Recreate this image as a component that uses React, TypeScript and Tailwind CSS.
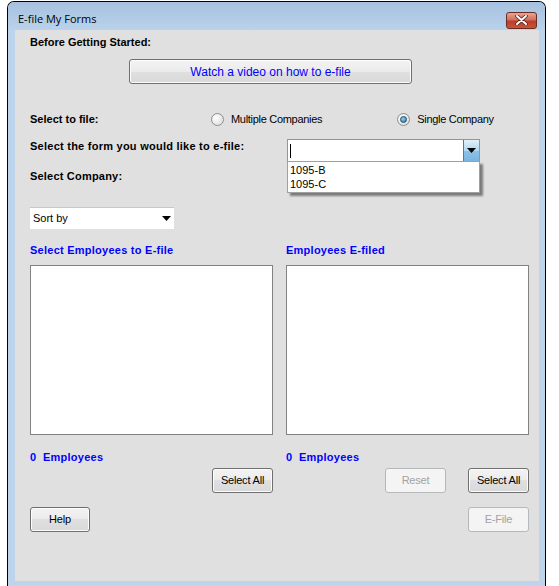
import React from "react";

const label = "font-['Liberation_Sans',Arial,sans-serif]";

function WinButton({
  children,
  disabled,
  className = "",
  textClass = "",
}: {
  children: React.ReactNode;
  disabled?: boolean;
  className?: string;
  textClass?: string;
}) {
  return (
    <div
      className={
        "flex items-center justify-center rounded-[3px] border " +
        (disabled
          ? "border-[#b5b9bc] bg-[#f4f4f4] text-[#a3a3a3] "
          : "border-[#6f6f6f] bg-[linear-gradient(#f3f3f3,#ebebeb_50%,#e0e0e0_50%,#d9d9d9)] text-black shadow-[inset_0_0_0_1px_#fcfcfc] ") +
        className
      }
    >
      <span className={"text-[11px] leading-none tracking-[-0.2px] " + label + " " + textClass}>{children}</span>
    </div>
  );
}

function Radio({ checked, text }: { checked?: boolean; text: string }) {
  return (
    <div className="flex items-center gap-[7px]">
      <div className="flex h-[13px] w-[13px] items-center justify-center rounded-full border border-[#8e8f8f] bg-[radial-gradient(circle_at_35%_35%,#ffffff,#d6d6d6)]">
        {checked && (
          <div className="h-[7px] w-[7px] rounded-full border border-[#1d4e70] bg-[radial-gradient(circle_at_40%_35%,#9bd2f4,#1f6ea6)]" />
        )}
      </div>
      <span className={"text-[11px] tracking-[-0.3px] text-black " + label}>{text}</span>
    </div>
  );
}

function SmallArrow() {
  return (
    <svg width="9" height="5" viewBox="0 0 9 5">
      <path d="M0 0h9L4.5 5z" fill="#000" />
    </svg>
  );
}

export default function App() {
  return (
    <div className="h-[586px] w-[559px] overflow-hidden bg-white">
      <div className="ml-[7px] mt-[1px] h-[600px] w-[539px] rounded-t-[7px] border border-b-0 border-black bg-[#bdd4ec]">
        {/* title bar */}
        <div className="flex h-[28px] items-center justify-between rounded-t-[6px] bg-[linear-gradient(#a6c1df,#bad2eb)] pl-[10px] pr-[8px]">
          <span className="mt-[6px] font-['Open_Sans',sans-serif] text-[11px] text-black">E-file My Forms</span>
          <div className="mt-[8px] flex h-[17px] w-[31px] items-center justify-center rounded-[3px] border border-[#6b2a22] bg-[linear-gradient(#e6a698,#d0705d_45%,#bf3d27_55%,#c8533c)]">
            <svg width="13" height="10" viewBox="0 0 13 10">
              <path d="M2 1l9 8M11 1l-9 8" stroke="#5a2018" strokeWidth="3.6" strokeLinecap="round" />
              <path d="M2 1l9 8M11 1l-9 8" stroke="#ffffff" strokeWidth="2" strokeLinecap="round" />
            </svg>
          </div>
        </div>

        {/* client area */}
        <div className="ml-[7px] h-[551px] w-[524px] bg-[#e0e0e0] pl-[15px] pr-[10px]">
          <div className={"pt-[6px] text-[11px] font-bold leading-[13px] text-black " + label}>
            Before Getting Started:
          </div>

          <WinButton className="ml-[99px] mt-[10px] h-[25px] w-[283px]" textClass="text-[#0000ff] text-[12px] tracking-[0px]">
            Watch a video on how to e-file
          </WinButton>

          <div className="mt-[28px] flex h-[14px] items-center">
            <span className={"w-[181px] text-[11px] font-bold text-black " + label}>Select to file:</span>
            <Radio text="Multiple Companies" />
            <div className="ml-[75px]">
              <Radio checked text="Single Company" />
            </div>
          </div>

          <div className="relative mt-[13px] flex h-[23px] items-start">
            <span className={"w-[257px] pt-[0px] text-[11px] font-bold leading-[14px] tracking-[0.25px] text-black " + label}>
              Select the form you would like to e-file:
            </span>
            <div className="flex h-[23px] w-[193px] border border-[#7a9cbc] bg-white">
              <div className="flex flex-1 items-center pl-[2px]">
                <div className="h-[14px] w-[1px] bg-black" />
              </div>
              <div className="flex w-[16px] items-center justify-center border-l border-[#3c7fb1] bg-[linear-gradient(#e3f1fb,#b1d7f1_50%,#8cc2e8_50%,#7ab5df)]">
                <SmallArrow />
              </div>
            </div>
            <div className="absolute left-[257px] top-[22px] w-[193px] border border-[#a0a0a0] bg-white py-[1px] shadow-[3px_3px_2px_rgba(0,0,0,0.45)]">
              <div className={"h-[14px] pl-[2px] text-[11px] leading-[14px] text-black " + label}>1095-B</div>
              <div className={"h-[14px] pl-[2px] text-[11px] leading-[14px] text-black " + label}>1095-C</div>
            </div>
          </div>

          <div className={"mt-[7px] text-[11px] font-bold leading-[14px] tracking-[0.2px] text-black " + label}>
            Select Company:
          </div>

          <div className="mt-[24px] flex h-[22px] w-[144px] items-center justify-between border-t border-[#c8c8c8] bg-white pl-[3px] pr-[3px]">
            <span className={"text-[11px] text-black " + label}>Sort by</span>
            <SmallArrow />
          </div>

          <div className="mt-[14px] grid grid-cols-[243px_243px] gap-x-[13px]">
            <div className={"text-[11px] font-bold leading-[14px] tracking-[0.25px] text-[#0000ff] " + label}>
              Select Employees to E-file
            </div>
            <div className={"text-[11px] font-bold leading-[14px] tracking-[0.25px] text-[#0000ff] " + label}>
              Employees E-filed
            </div>

            <div className="mt-[8px] h-[170px] border border-[#828282] bg-white" />
            <div className="mt-[8px] h-[170px] border border-[#828282] bg-white" />

            <div className={"mt-[15px] text-[11px] font-bold leading-[14px] tracking-[0.25px] text-[#0000ff] " + label}>
              0&nbsp;&nbsp;Employees
            </div>
            <div className={"mt-[15px] text-[11px] font-bold leading-[14px] tracking-[0.25px] text-[#0000ff] " + label}>
              0&nbsp;&nbsp;Employees
            </div>

            <div className="mt-[4px] flex justify-end">
              <WinButton className="h-[25px] w-[61px]">Select All</WinButton>
            </div>
            <div className="mt-[4px] flex justify-between pl-[99px]">
              <WinButton disabled className="h-[25px] w-[61px]">Reset</WinButton>
              <WinButton className="h-[25px] w-[61px]">Select All</WinButton>
            </div>

            <div className="mt-[14px] flex">
              <WinButton className="h-[25px] w-[60px]">Help</WinButton>
            </div>
            <div className="mt-[14px] flex justify-end">
              <WinButton disabled className="h-[25px] w-[61px]">E-File</WinButton>
            </div>
          </div>
        </div>
      </div>
    </div>
  );
}
